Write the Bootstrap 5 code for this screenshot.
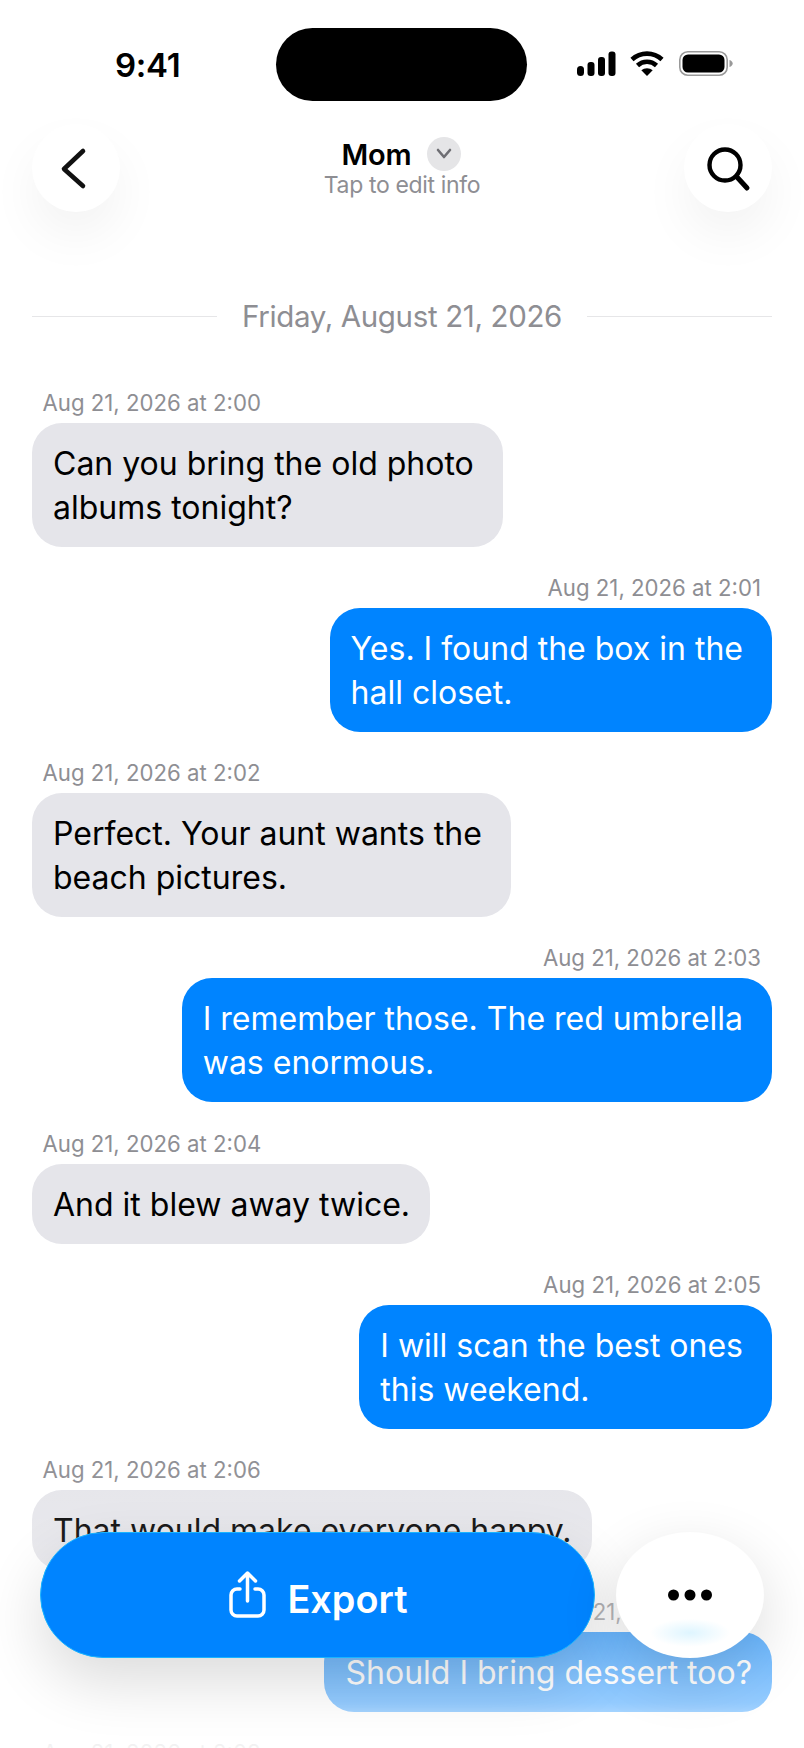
<!DOCTYPE html>
<html lang="en">
<head>
<meta charset="utf-8">
<title>Mom</title>
<link href="https://cdn.jsdelivr.net/npm/bootstrap@5.3.0/dist/css/bootstrap.min.css" rel="stylesheet">
<style>
html,body{margin:0;background:#fff;}
body{font-family:Inter,"Liberation Sans",sans-serif;color:#000;}
.phone-frame{width:804px;height:1748px;overflow:hidden;position:relative;background:#fff;}
.status-row{height:73px;margin-top:28px;padding:0 0 0 115px;}
.clock-text{font-size:33px;font-weight:600;width:161px;line-height:1;padding-top:2px;letter-spacing:-.3px;}
.island{width:251px;height:73px;background:#000;border-radius:37px;}
.status-icons{margin-left:50px;margin-top:-1px;}
.nav-row{margin-top:23px;padding:0 32px;height:88px;}
.round-btn{width:88px;height:88px;border-radius:50%;background:#fff;border:0;padding:0;box-shadow:0 24px 50px rgba(0,0,0,.05);}
.contact{width:300px;}
.contact-name{font-size:29px;font-weight:600;line-height:33px;letter-spacing:-.2px;margin-left:-1px;}
.chev-circle{width:34px;height:34px;border-radius:50%;background:#e5e5e7;margin-left:16px;}
.contact-sub{font-size:23px;line-height:28px;color:#8e8e93;letter-spacing:-.35px;}
.date-row{margin-top:82px;padding:0 32px;height:44px;gap:25px;}
.date-line{height:1px;background:#e6e6e8;flex:1 1 0;}
.date-text{font-size:29.5px;color:#8e8e93;line-height:44px;letter-spacing:-.35px;}
.thread{padding:0 32px;margin-top:51.5px;gap:28.3px;}
.stamp{font-size:22.2px;line-height:26px;color:#8e8e93;margin:0 11px 7px 10.5px;}
.bubble-box{font-size:32px;line-height:44px;padding:19px 20px 17px 21px;border-radius:30px;white-space:nowrap;}
.bubble-wrapped{padding-right:29px;}
.bubble-in{background:#e5e5ea;color:#000;}
.bubble-out{background:#0084ff;color:#fff;}
.bottom-fade{position:absolute;left:0;right:0;bottom:0;height:300px;background:linear-gradient(to bottom,rgba(255,255,255,0) 0,rgba(255,255,255,.12) 30%,rgba(255,255,255,.42) 62%,rgba(255,255,255,.58) 85%,rgba(255,255,255,.9) 100%);}
.action-bar{position:absolute;left:40px;top:1532px;width:724px;gap:21px;}
.export-btn{width:555px;height:126px;border-radius:63px;background:#0084ff;border:1.5px solid #19b4ff;color:#fff;font-size:37.8px;font-weight:600;box-shadow:0 24px 60px rgba(0,0,0,.14);gap:20px;padding:0 0 0 2px;}
.export-btn:hover{background:#0084ff;color:#fff;}
.export-label{padding-top:8px;}
.more-btn{width:148px;height:126px;border-radius:50%/50%;background:radial-gradient(ellipse 40px 14px at 50% 80%,#def5ff 0,rgba(255,255,255,0) 100%),#fff;border:0;padding:0;box-shadow:0 20px 60px rgba(0,0,0,.14);}
</style>
</head>
<body>
<div class="phone-frame">
  <div class="status-row d-flex align-items-center">
    <div class="clock-text">9:41</div>
    <div class="island"></div>
    <div class="status-icons d-flex align-items-center">
      <svg width="157" height="26" viewBox="0 0 157 26" aria-hidden="true">
        <rect x="0" y="15" width="7" height="10" rx="3.5" fill="#000"/>
        <rect x="10.5" y="11" width="7" height="14" rx="3" fill="#000"/>
        <rect x="21" y="6" width="7" height="19" rx="3" fill="#000"/>
        <rect x="31.5" y="0.5" width="7" height="24.5" rx="3" fill="#000"/>
        <path d="M55 8.500a22 22 0 0 1 30 0M60.500 14.500a14 14 0 0 1 19 0" fill="none" stroke="#000" stroke-width="4.600"/>
        <path d="M64.300 19.200a9 9 0 0 1 11.400 0L70 25z" fill="#000"/>
        <rect x="102.8" y="0.8" width="47.4" height="23.4" rx="8" fill="none" stroke="#999" stroke-width="1.6"/>
        <rect x="105.5" y="3.5" width="42" height="18" rx="5.5" fill="#000"/>
        <path d="M152.500 9c2 .6 3.200 2 3.200 3.500s-1.200 2.900-3.200 3.500z" fill="#999"/>
      </svg>
    </div>
  </div>

  <div class="nav-row d-flex justify-content-between align-items-center">
    <button class="round-btn d-flex align-items-center justify-content-center" aria-label="Back">
      <svg width="88" height="88" viewBox="0 0 88 88"><path d="M51 27 L32 45 L51 62" fill="none" stroke="#111" stroke-width="4.6" stroke-linecap="round" stroke-linejoin="round"/></svg>
    </button>
    <div class="contact text-center">
      <div class="d-flex justify-content-center align-items-center">
        <span class="contact-name">Mom</span>
        <span class="chev-circle d-flex align-items-center justify-content-center">
          <svg width="18" height="14" viewBox="0 0 18 14"><path d="M3 3l6 7 6-7" fill="none" stroke="#6e6e73" stroke-width="2.6" stroke-linecap="round" stroke-linejoin="round"/></svg>
        </span>
      </div>
      <div class="contact-sub">Tap to edit info</div>
    </div>
    <button class="round-btn d-flex align-items-center justify-content-center" aria-label="Search">
      <svg width="88" height="88" viewBox="0 0 88 88"><circle cx="41" cy="41" r="15.5" fill="none" stroke="#000" stroke-width="4.4"/><path d="M52.500 52.500L63 64" stroke="#000" stroke-width="5" stroke-linecap="round"/></svg>
    </button>
  </div>

  <div class="date-row d-flex align-items-center">
    <div class="date-line"></div>
    <div class="date-text">Friday, August 21, 2026</div>
    <div class="date-line"></div>
  </div>

  <div class="thread d-flex flex-column">
    <div class="d-flex flex-column align-items-start"><div class="stamp">Aug 21, 2026 at 2:00</div><div class="bubble-box bubble-in bubble-wrapped">Can you bring the old photo<br>albums tonight?</div></div>
    <div class="d-flex flex-column align-items-end"><div class="stamp">Aug 21, 2026 at 2:01</div><div class="bubble-box bubble-out bubble-wrapped">Yes. I found the box in the<br>hall closet.</div></div>
    <div class="d-flex flex-column align-items-start"><div class="stamp">Aug 21, 2026 at 2:02</div><div class="bubble-box bubble-in bubble-wrapped">Perfect. Your aunt wants the<br>beach pictures.</div></div>
    <div class="d-flex flex-column align-items-end"><div class="stamp">Aug 21, 2026 at 2:03</div><div class="bubble-box bubble-out bubble-wrapped">I remember those. The red umbrella<br>was enormous.</div></div>
    <div class="d-flex flex-column align-items-start"><div class="stamp">Aug 21, 2026 at 2:04</div><div class="bubble-box bubble-in">And it blew away twice.</div></div>
    <div class="d-flex flex-column align-items-end"><div class="stamp">Aug 21, 2026 at 2:05</div><div class="bubble-box bubble-out bubble-wrapped">I will scan the best ones<br>this weekend.</div></div>
    <div class="d-flex flex-column align-items-start"><div class="stamp">Aug 21, 2026 at 2:06</div><div class="bubble-box bubble-in">That would make everyone happy.</div></div>
    <div class="d-flex flex-column align-items-end"><div class="stamp">Aug 21, 2026 at 2:07</div><div class="bubble-box bubble-out">Should I bring dessert too?</div></div>
    <div class="d-flex flex-column align-items-start"><div class="stamp">Aug 21, 2026 at 2:08</div></div>
  </div>

  <div class="bottom-fade"></div>

  <div class="action-bar d-flex">
    <button class="export-btn btn d-flex align-items-center justify-content-center">
      <svg width="38" height="48" viewBox="0 0 38 48"><path d="M11 18H8a6 6 0 0 0-6 6v15a6 6 0 0 0 6 6h21a6 6 0 0 0 6-6V24a6 6 0 0 0-6-6h-3M18.500 30V3M10.500 10l8-8 8 8" fill="none" stroke="#fff" stroke-width="3.5" stroke-linecap="round" stroke-linejoin="round"/></svg>
      <span class="export-label">Export</span>
    </button>
    <button class="more-btn d-flex align-items-center justify-content-center" aria-label="More">
      <svg width="46" height="14" viewBox="0 0 46 14"><circle cx="6.500" cy="7" r="5.5" fill="#000"/><circle cx="23" cy="7" r="5.5" fill="#000"/><circle cx="39.500" cy="7" r="5.5" fill="#000"/></svg>
    </button>
  </div>
</div>
<script src="https://cdn.jsdelivr.net/npm/bootstrap@5.3.0/dist/js/bootstrap.bundle.min.js"></script>
</body>
</html>
